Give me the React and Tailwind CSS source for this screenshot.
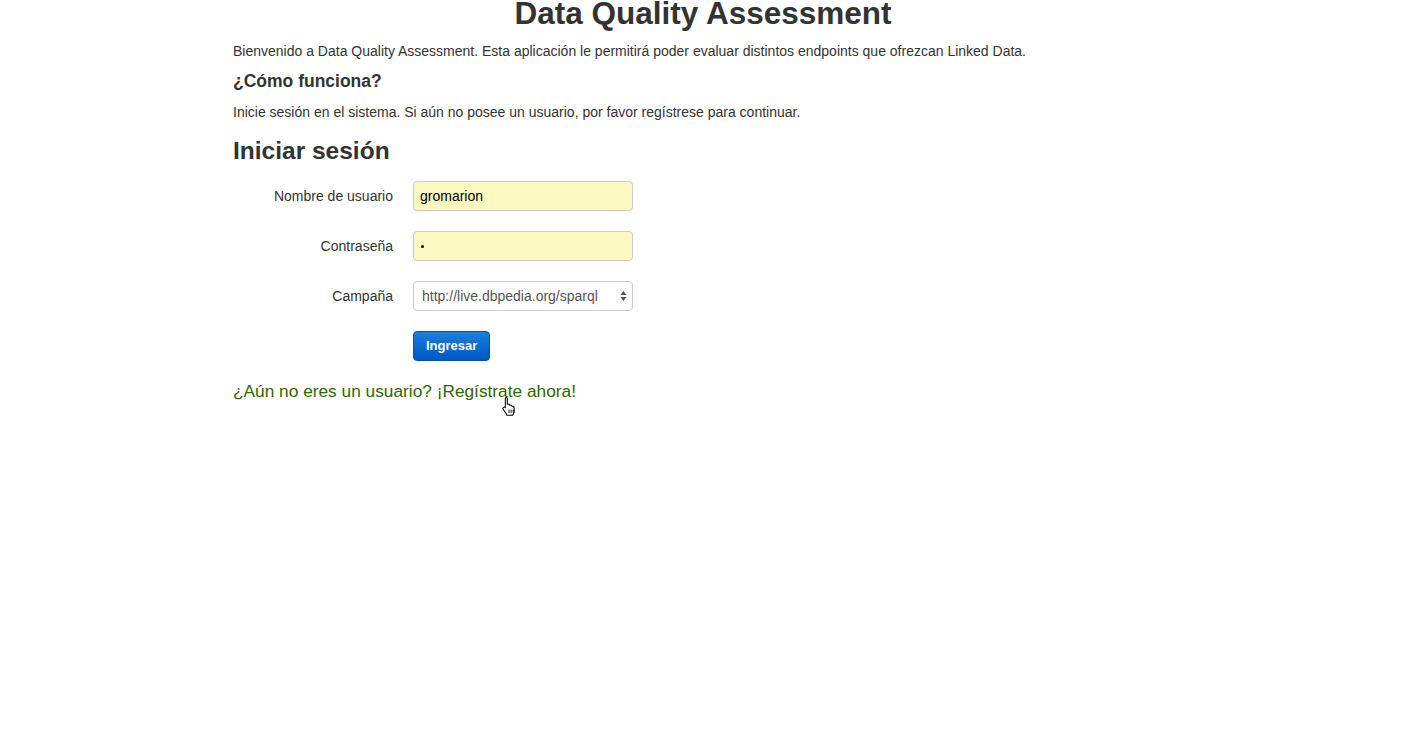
import React from "react";

function HandCursor() {
  return (
    <svg width="16" height="20" viewBox="0 0 15 19" className="absolute left-[501px] top-[396px]">
      <path
        d="M4.5 1.2c.8 0 1.4.6 1.4 1.4v5.2l.4-.1c.7-.2 1.4.1 1.7.7l.2.4.3-.1c.7-.2 1.4.1 1.7.7l.2.4.3-.1c.8-.1 1.5.4 1.6 1.2l.2 3.2c0 1.2-.3 2.3-1 3.2l-.6.9H5.6l-.5-.8L2 12.6c-.4-.6-.3-1.4.3-1.8.6-.4 1.3-.3 1.8.2l-.1.1V2.6c0-.8.6-1.4 1.4-1.4z"
        fill="#fff"
        stroke="#000"
        strokeWidth="1"
        strokeLinejoin="round"
      />
      <path d="M7.5 13v3M9.5 13v3M11.5 13v3" stroke="#000" strokeWidth="0.9" />
    </svg>
  );
}

export default function App() {
  return (
    <div
      className="relative min-h-[751px] bg-white text-[#333333] text-[14px] leading-[20px]"
      style={{ fontFamily: '"Liberation Sans", Arial, Helvetica, sans-serif' }}
    >
      <div className="w-[940px] ml-[233px]">
        <h1 className="text-[31.5px] leading-[26px] h-[26px] font-bold text-center whitespace-nowrap">
          Data Quality Assessment
        </h1>
        <p className="mt-[15px]">
          Bienvenido a Data Quality Assessment. Esta aplicación le permitirá poder evaluar distintos endpoints que ofrezcan Linked Data.
        </p>
        <h4 className="mt-[10px] text-[17.5px] leading-[20px] font-bold">¿Cómo funciona?</h4>
        <p className="mt-[11px]">
          Inicie sesión en el sistema. Si aún no posee un usuario, por favor regístrese para continuar.
        </p>
        <h3 className="mt-[14px] text-[24.5px] leading-[30px] font-bold">Iniciar sesión</h3>

        <form className="mt-[15px] flex flex-col gap-[20px]" onSubmit={(e) => e.preventDefault()}>
          <div className="flex items-center">
            <label className="w-[160px] text-right">Nombre de usuario</label>
            <input
              className="ml-[20px] w-[220px] h-[30px] px-[6px] bg-[#fbf8c0] border border-[#cccccc] rounded-[4px] text-[14px] text-black outline-none"
              defaultValue="gromarion"
              style={{ fontFamily: '"Liberation Sans", Arial, sans-serif' }}
            />
          </div>
          <div className="flex items-center">
            <label className="w-[160px] text-right">Contraseña</label>
            <div className="ml-[20px] w-[220px] h-[30px] px-[6px] bg-[#fbf8c0] border border-[#cccccc] rounded-[4px] flex items-center">
              <span className="w-[3px] h-[3px] rounded-full bg-black inline-block ml-[1px]"></span>
            </div>
          </div>
          <div className="flex items-center">
            <label className="w-[160px] text-right">Campaña</label>
            <div className="ml-[20px] w-[220px] h-[30px] pl-[8px] pr-[4px] bg-white border border-[#cccccc] rounded-[4px] flex items-center justify-between text-[#555555]">
              <span>http://live.dbpedia.org/sparql</span>
              <svg width="7" height="12" viewBox="0 0 7 12" className="mr-[1px]">
                <path d="M3.5 1L6.5 5H0.5z" fill="#555" />
                <path d="M3.5 11L6.5 7H0.5z" fill="#555" />
              </svg>
            </div>
          </div>
          <div className="flex">
            <button
              type="submit"
              className="ml-[180px] h-[30px] px-[12px] rounded-[4px] border border-[#0050b0] bg-gradient-to-b from-[#1c7fdb] to-[#0056c6] text-white font-bold text-[13px] leading-[18px]"
              style={{ fontFamily: '"Liberation Sans", Arial, sans-serif' }}
            >
              Ingresar
            </button>
          </div>
        </form>

        <p className="mt-[19px] text-[17.3px] leading-[22px] text-[#336600]">
          ¿Aún no eres un usuario? ¡Regístrate ahora!
        </p>
      </div>
      <HandCursor />
    </div>
  );
}
